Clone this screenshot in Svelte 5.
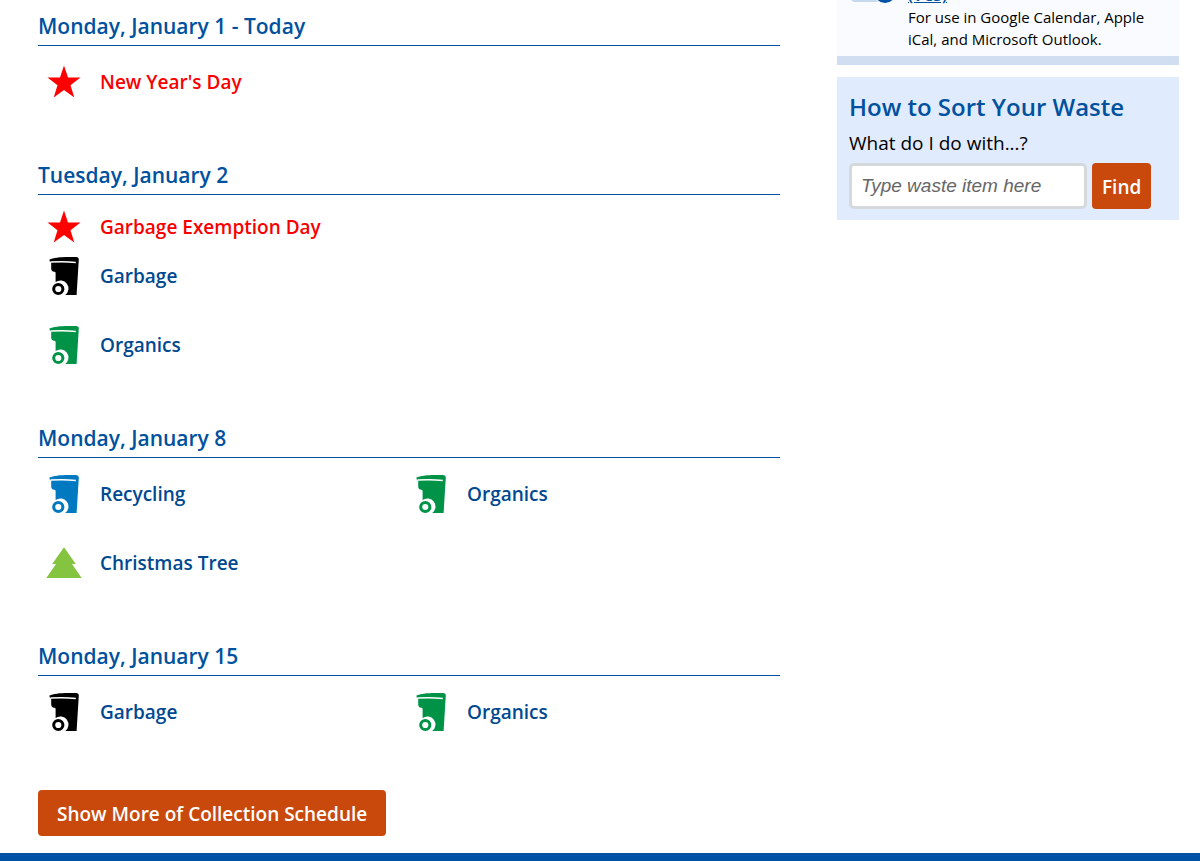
<script>
	let wasteItem = $state('');

	const days = [
		{
			date: 'Monday, January 1 - Today',
			items: [{ name: "New Year's Day", icon: 'star' }]
		},
		{
			date: 'Tuesday, January 2',
			notice: 'Garbage Exemption Day',
			items: [
				{ name: 'Garbage', icon: 'bin', wide: true },
				{ name: 'Organics', icon: 'bin', wide: true }
			]
		},
		{
			date: 'Monday, January 8',
			items: [
				{ name: 'Recycling', icon: 'bin' },
				{ name: 'Organics', icon: 'bin' },
				{ name: 'Christmas Tree', icon: 'tree' }
			]
		},
		{
			date: 'Monday, January 15',
			items: [
				{ name: 'Garbage', icon: 'bin' },
				{ name: 'Organics', icon: 'bin' }
			]
		}
	];

	const handleSubmit = (event) => {
		event.preventDefault();
	};
</script>

{#snippet icon(type, name)}
	<svg class="icon {name.toLowerCase()}" viewBox="0 0 40 40" aria-hidden="true">
		{#if type === 'star'}
			<path fill="#ff0000" d="M20 3.5 L24 15.5 L36.5 15.5 L26.5 23.2 L30.3 35.5 L20 28 L9.7 35.5 L13.5 23.2 L3.5 15.5 L16 15.5 Z" />
		{:else if type === 'tree'}
			<path fill="#84c441" d="M20 4.3 L31.8 21 H28 L37.7 35 H2.3 L12 21 H8.2 Z" />
		{:else}
			<path d="M5.5 3.6 C10 1.2 20 .5 32 1.1 Q34.9 1.3 34.8 3.5 L32.6 39 H21.2 A7.4 7.4 0 0 0 11.6 26 V17 Q11.6 15.8 10.3 15.8 Q7.2 15.6 7.2 12.5 V6 H6.4 Q5.4 6 5.5 3.6 Z" />
			<path class="lid-line" d="M6.5 6.1 Q20 5.3 31.8 6.4" />
			<circle class="wheel" cx="14.3" cy="33" r="4.6" />
		{/if}
	</svg>
{/snippet}

<div class="page">
	<main>
		{#each days as day}
			<section>
				<h2>{day.date}</h2>
				{#if day.notice}
					<p class="notice">
						{@render icon('star', 'holiday-star')}
						{day.notice}
					</p>
				{/if}
				<ul>
					{#each day.items as item}
						<li class:holiday={item.icon === 'star'} class:wide={item.wide}>
							{@render icon(item.icon, item.icon === 'bin' ? item.name : item.icon)}
							{item.name}
						</li>
					{/each}
				</ul>
			</section>
		{/each}

		<button class="more" type="button">Show More of Collection Schedule</button>
	</main>

	<aside>
		<div class="calendar">
			<svg class="calendar-icon" viewBox="0 0 50 50" aria-hidden="true">
				<rect x="5" y="2" width="36" height="45" rx="4" fill="#c5d8ee" />
				<circle cx="39" cy="37" r="12" fill="#fafbff" />
				<circle cx="39" cy="37" r="11" fill="#0052a5" />
			</svg>
			<div>
				<a href="#calendar">(VCS)</a>
				<p>For use in Google Calendar, Apple iCal, and Microsoft Outlook.</p>
			</div>
		</div>

		<form onsubmit={handleSubmit}>
			<h3>How to Sort Your Waste</h3>
			<label for="waste-item">What do I do with...?</label>
			<div class="search">
				<input id="waste-item" type="text" bind:value={wasteItem} placeholder="Type waste item here" />
				<button type="submit">Find</button>
			</div>
		</form>
	</aside>
</div>

<footer></footer>

<style>
	:global(body) {
		margin: 0;
		background: #fff;
		color: #000;
		font-family: 'Open Sans', 'Noto Sans', sans-serif;
	}

	.page {
		display: grid;
		grid-template-columns: 1fr 342px;
		column-gap: 57px;
		padding: 0 21px 17px 38px;
	}

	main {
		padding-top: 9px;
	}

	section {
		margin-bottom: 52px;
	}

	h2 {
		margin: 0;
		padding-bottom: 1px;
		border-bottom: 1px solid #0052a0;
		color: #00519e;
		font-size: 21px;
		font-weight: 600;
		line-height: 35px;
	}

	ul {
		display: grid;
		grid-template-columns: 1fr 1fr;
		row-gap: 21px;
		list-style: none;
		margin: 0;
		padding: 12px 8px 0 0;
	}

	li,
	.notice {
		display: flex;
		align-items: center;
		gap: 16px;
		padding-left: 6px;
		color: #004990;
		font-size: 19px;
		font-weight: 600;
	}

	li {
		height: 48px;
	}

	.wide {
		grid-column: 1 / -1;
	}

	.notice {
		height: 40px;
		margin: 12px 0 -7px;
	}

	.holiday,
	.notice {
		color: #f80000;
	}

	.icon {
		width: 40px;
		height: 40px;
	}

	.garbage {
		fill: #000;
		stroke: #000;
	}

	.organics {
		fill: #009247;
		stroke: #009247;
	}

	.recycling {
		fill: #0079c1;
		stroke: #0079c1;
	}

	.icon path {
		stroke: none;
	}

	.icon .lid-line {
		fill: none;
		stroke: #fff;
		stroke-width: 1.5;
	}

	.wheel {
		fill: #fff;
		stroke-width: 3;
	}

	button {
		border: 0;
		border-radius: 4px;
		padding: 1px 19px 0;
		height: 46px;
		background: #c9480c;
		color: #fff;
		font: 600 19px 'Open Sans', 'Noto Sans', sans-serif;
		cursor: pointer;
	}

	.more {
		display: block;
		margin-top: 54px;
	}

	.calendar {
		display: flex;
		align-items: flex-end;
		gap: 12px;
		height: 50px;
		overflow: hidden;
		padding: 0 16px 6px 9px;
		margin-bottom: 12px;
		border-bottom: 9px solid #d1ddf1;
		background: #fafbff;
		line-height: 22px;
	}

	.calendar-icon {
		flex: none;
		width: 50px;
		height: 50px;
		margin-bottom: 45px;
	}

	.calendar a {
		color: #00519e;
		font-size: 16px;
		font-weight: 600;
	}

	.calendar p {
		margin: 0;
		font-size: 15px;
	}

	form {
		padding: 12px 12px 11px;
		background: #e0ebfd;
	}

	h3 {
		margin: 0;
		color: #00519e;
		font-size: 24px;
		font-weight: 600;
		line-height: 36px;
	}

	label {
		display: block;
		padding-bottom: 2px;
		font-size: 19px;
		line-height: 36px;
	}

	.search {
		display: flex;
		gap: 5px;
	}

	input {
		box-sizing: border-box;
		width: 238px;
		height: 46px;
		border: 3px solid #d5d9dc;
		border-radius: 5px;
		padding: 0 9px 1px;
		background: #fff;
		font-family: 'Liberation Sans', Arial, sans-serif;
		font-size: 19px;
	}

	input::placeholder {
		color: #666;
		font-style: italic;
	}

	.search button {
		padding: 1px 10px 0;
	}

	footer {
		height: 8px;
		background: #0052a5;
	}
</style>
